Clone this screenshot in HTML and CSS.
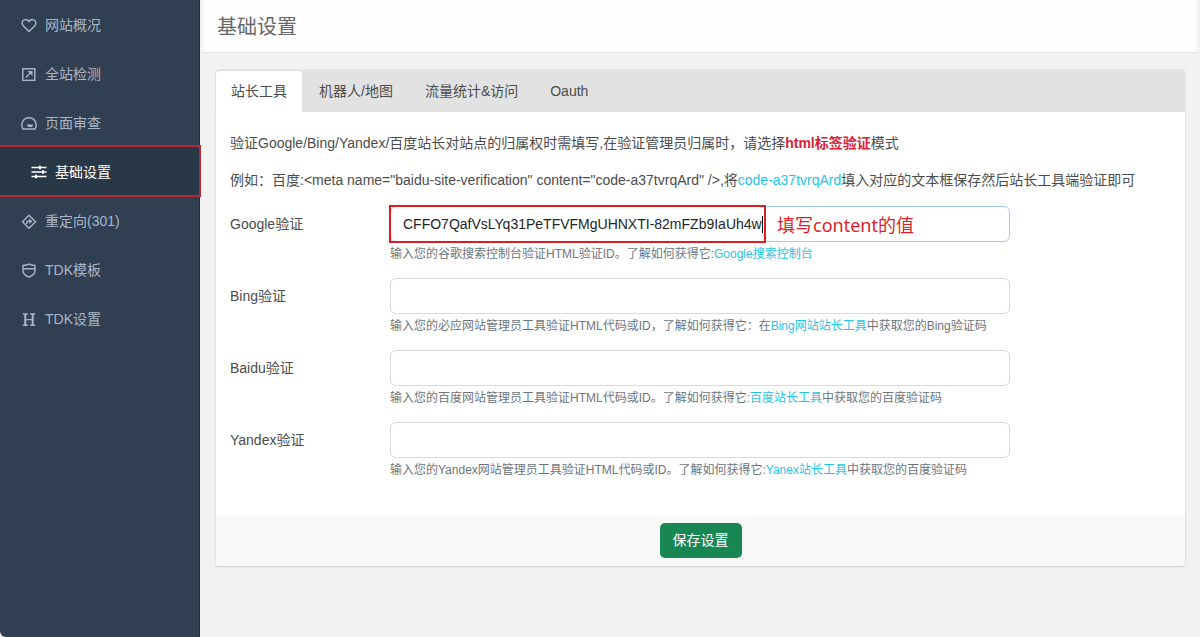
FILE: index.html
```html
<!DOCTYPE html>
<html lang="zh-CN">
<head>
<meta charset="utf-8">
<meta name="viewport" content="width=device-width, initial-scale=1">
<title>基础设置</title>
<link rel="stylesheet" href="styles.css">
</head>
<body>
<div class="app">
  <nav class="sidebar">
    <a class="nav-item" href="#"><svg class="icon" viewBox="0 0 16 16"><path d="M8 13.500 L2.200 7.700 C.3 5.500 1 2.300 3.900 1.600 C5.800 1.200 7.200 2.300 8 3.500 C8.800 2.300 10.200 1.200 12.100 1.600 C15 2.300 15.700 5.500 13.800 7.700 Z"/></svg><span>网站概况</span></a>
    <a class="nav-item" href="#"><svg class="icon" viewBox="0 0 16 16"><rect x="1.800" y="1.800" width="12" height="11.500"/><path d="M4.800 10.500 L10.500 4.800"/><path class="solid" d="M6.500 4 H11.500 V9 Z"/></svg><span>全站检测</span></a>
    <a class="nav-item" href="#"><svg class="icon" viewBox="0 0 16 16"><path d="M1.800 13 C-1 7 2.800 1.800 8 1.800 C13.200 1.800 17 7 14.200 13 Z"/><path d="M6 9 L12 9.500 M7 10.300 H11"/></svg><span>页面审查</span></a>
    <a class="nav-item nav-item-active" href="#" aria-current="page"><svg class="icon" viewBox="0 0 16 16"><path d="M.5 3.500 H15.500 M.5 8 H15.500 M.5 12.500 H15.500"/><path class="knob" d="M9 1.800 V5.200 M12 6.300 V9.700 M5 10.800 V14.200"/></svg><span>基础设置</span></a>
    <a class="nav-item" href="#"><svg class="icon" viewBox="0 0 16 16"><path d="M8 1.200 L14.500 7.700 L8 14.200 L1.500 7.700 Z"/><path d="M5.700 10 V8.800 Q5.700 7.300 7.300 7.300 H9"/><path class="solid" d="M8.300 4.500 L11.300 7.300 L8.300 10 Z"/></svg><span>重定向(301)</span></a>
    <a class="nav-item" href="#"><svg class="icon" viewBox="0 0 16 16"><path d="M2 2.500 Q5.500 2.300 8 1.200 Q10.500 2.300 14 2.500 V7.500 Q14 12 8 14 Q2 12 2 7.500 Z M2 5.800 H14"/></svg><span>TDK模板</span></a>
    <a class="nav-item" href="#"><svg class="icon" viewBox="0 0 16 16"><path d="M1.800 2 H6.800 M9.200 2 H14.200 M1.800 13.300 H6.800 M9.200 13.300 H14.200 M4 7.600 H12"/><path class="knob" d="M4.300 2 V13.300 M11.700 2 V13.300"/></svg><span>TDK设置</span></a>
  </nav>
  <div class="main">
    <header class="page-header"><h1 class="page-title">基础设置</h1></header>
    <main class="content">
      <form class="card">
        <div class="tabs" role="tablist">
          <button class="tab tab-active" type="button" role="tab" aria-selected="true">站长工具</button>
          <button class="tab" type="button" role="tab">机器人/地图</button>
          <button class="tab" type="button" role="tab">流量统计&amp;访问</button>
          <button class="tab" type="button" role="tab">Oauth</button>
        </div>
        <div class="card-body">
          <p class="intro">验证Google/Bing/Yandex/百度站长对站点的归属权时需填写,在验证管理员归属时，请选择<strong class="danger">html标签验证</strong>模式</p>
          <p class="intro">例如：百度:&lt;meta name="baidu-site-verification" content="code-a37tvrqArd" /&gt;,将<span class="info">code-a37tvrqArd</span>填入对应的文本框保存然后站长工具端验证即可</p>
          <div class="field">
            <label class="label" for="google">Google验证</label>
            <div class="control">
              <div class="input-wrap">
                <input class="input input-focus" id="google" type="text" value="CFFO7QafVsLYq31PeTFVFMgUHNXTI-82mFZb9IaUh4w">
                <div class="mark"><span class="caret"></span></div>
                <span class="note">填写content的值</span>
              </div>
              <div class="help">输入您的谷歌搜索控制台验证HTML验证ID。了解如何获得它:<a class="info" href="#">Google搜索控制台</a></div>
            </div>
          </div>
          <div class="field">
            <label class="label" for="bing">Bing验证</label>
            <div class="control">
              <input class="input" id="bing" type="text">
              <div class="help">输入您的必应网站管理员工具验证HTML代码或ID，了解如何获得它：在<a class="info" href="#">Bing网站站长工具</a>中获取您的Bing验证码</div>
            </div>
          </div>
          <div class="field">
            <label class="label" for="baidu">Baidu验证</label>
            <div class="control">
              <input class="input" id="baidu" type="text">
              <div class="help">输入您的百度网站管理员工具验证HTML代码或ID。了解如何获得它:<a class="info" href="#">百度站长工具</a>中获取您的百度验证码</div>
            </div>
          </div>
          <div class="field">
            <label class="label" for="yandex">Yandex验证</label>
            <div class="control">
              <input class="input" id="yandex" type="text">
              <div class="help">输入您的Yandex网站管理员工具验证HTML代码或ID。了解如何获得它:<a class="info" href="#">Yanex站长工具</a>中获取您的百度验证码</div>
            </div>
          </div>
        </div>
        <div class="card-footer"><button class="save" type="button">保存设置</button></div>
      </form>
    </main>
  </div>
</div>
</body>
</html>
```

FILE: styles.css
```css
* { box-sizing: border-box; }

body {
  margin: 0;
  background: #f2f2f2;
  color: #4c4c4c;
  font: 14px/21px "Liberation Sans", "Noto Sans CJK SC", sans-serif;
}

.app { display: flex; min-height: 100vh; }

.sidebar {
  flex: 0 0 200px;
  padding-top: 1px;
  background: #304052;
  border-right: 1px solid #202d3d;
  border-bottom-left-radius: 6px;
}

.nav-item {
  display: flex;
  align-items: center;
  gap: 8px;
  height: 49px;
  padding-left: 21px;
  color: #a9b6c9;
  text-decoration: none;
}

.nav-item-active {
  height: 52px;
  margin: -3px -2px 0 0;
  padding-top: 2px;
  padding-left: 31px;
  background: #293846;
  border: 2px solid #b92733;
  border-left: 0;
  color: #fff;
}

.icon {
  width: 16px;
  height: 16px;
  fill: none;
  stroke: currentColor;
  stroke-width: 1.4;
}

.solid { fill: currentColor; stroke: none; }

.knob { stroke-width: 2; }

.main { flex: 1; min-width: 0; }

.page-header {
  height: 53px;
  margin: 0 3px;
  padding: 12px 14px 0;
  background: #fdfdfd;
  border-bottom: 1px solid #e7e7e7;
}

.page-title {
  margin: 0;
  font-size: 20px;
  font-weight: 400;
  line-height: 30px;
  color: #676767;
}

.content { padding: 16px 14px 16px 15px; }

.card {
  background: #fff;
  border: 1px solid #e4e4e6;
  border-bottom-color: #d3d5da;
  border-radius: 4px;
  box-shadow: 0 1px 2px rgba(0, 0, 0, 0.05);
}

.tabs {
  display: flex;
  margin-left: -1px;
  background: #e2e2e2;
  border-radius: 4px 4px 0 0;
}

.tab {
  height: 42px;
  padding: 0 15px;
  border: 1px solid transparent;
  border-bottom: 0;
  background: transparent;
  color: #4c4c4c;
  font: inherit;
}

.tab-active {
  background: #fff;
  border-color: #dee2e6;
  border-radius: 5px 5px 0 0;
}

.card-body { padding: 21px 15px 21px 14px; }

.intro { margin: 0 0 16px; }

.danger { color: #dc2033; }

.info { color: #1fc4e8; text-decoration: none; }

.field {
  display: grid;
  grid-template-columns: repeat(12, 1fr);
  column-gap: 20px;
  margin-bottom: 15px;
}

.intro + .field { margin-top: -1px; }

.label { grid-column: span 2; padding-top: 8px; }

.control { grid-column: span 8; }

.input-wrap { position: relative; }

.input {
  display: block;
  width: 100%;
  height: 36px;
  padding: 0 12px;
  border: 1px solid #d9dbe0;
  border-radius: 6px;
  background: #fff;
  color: #212529;
  font: inherit;
}

.input-focus { border-color: #a6c8f5; }

.mark {
  position: absolute;
  top: -1px;
  left: -1px;
  width: 377px;
  height: 38px;
  border: 2px solid #de1a22;
}

.caret {
  position: absolute;
  top: 9px;
  right: 1px;
  width: 1px;
  height: 17px;
  background: #111;
}

.note {
  position: absolute;
  top: 6px;
  left: 387px;
  color: #dc1f26;
  font: 18px/26px "Noto Sans", "Noto Sans CJK SC", sans-serif;
}

.help {
  margin-top: 3px;
  font-size: 12px;
  line-height: 18px;
  color: #6c757d;
}

.card-footer {
  padding: 8px;
  background: #f8f8f8;
  border-radius: 0 0 4px 4px;
  text-align: center;
}

.save {
  height: 35px;
  padding: 0 13px;
  border: 0;
  border-radius: 5px;
  background: #198754;
  color: #fff;
  font: inherit;
  vertical-align: top;
}
```
